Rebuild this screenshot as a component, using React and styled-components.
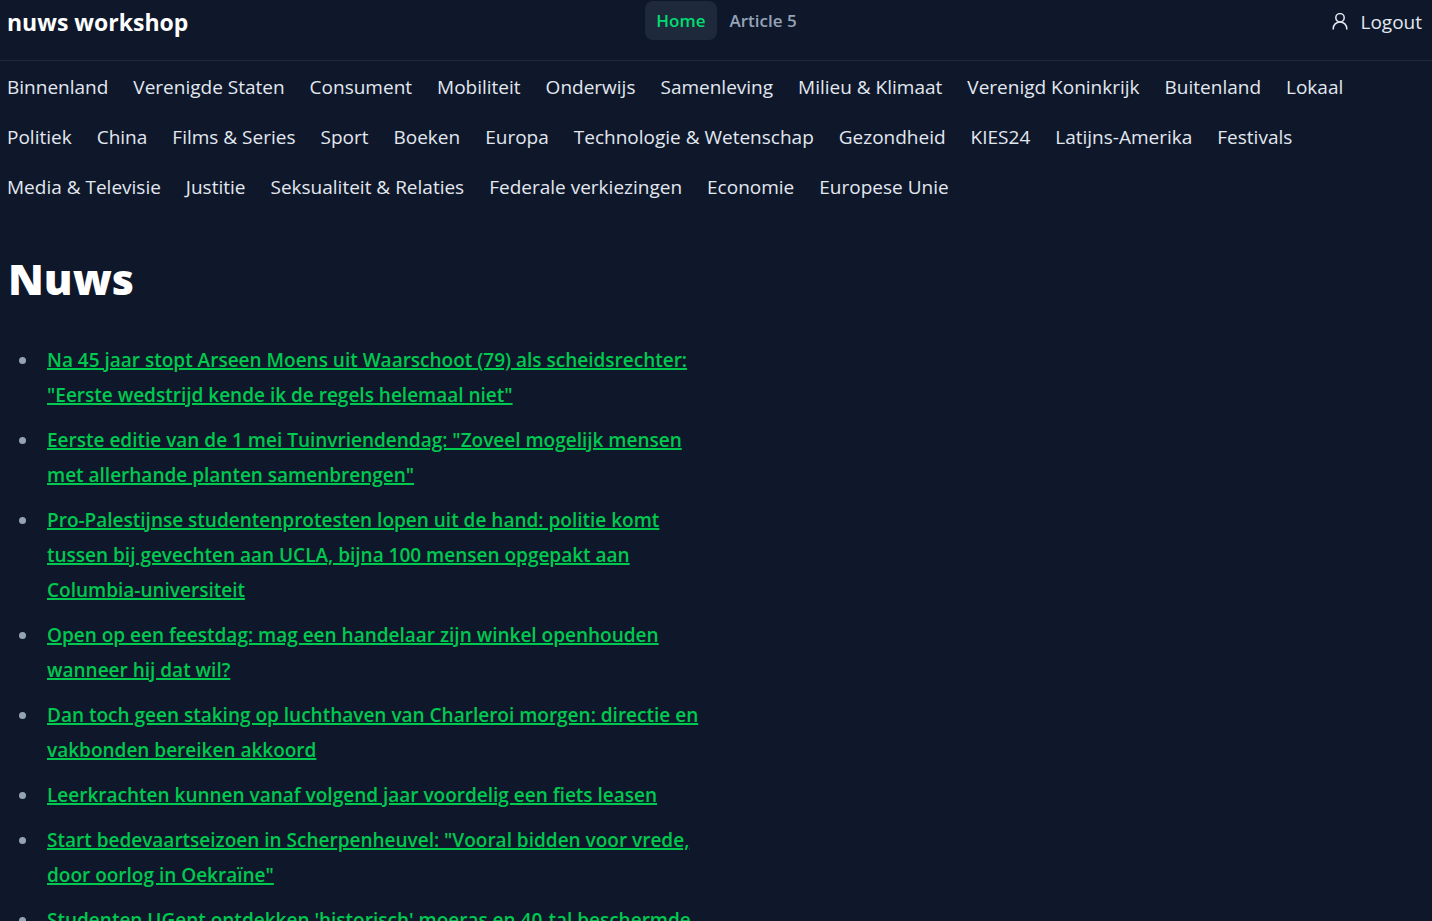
import React from "react";
import styled, { createGlobalStyle } from "styled-components";

const GlobalStyle = createGlobalStyle`
  *, *::before, *::after { box-sizing: border-box; }
  body {
    margin: 0;
    background: #0f172a;
    color: #e2e8f0;
    font-family: "Segoe UI", "Open Sans", "Noto Sans", sans-serif;
    font-size: 19px;
    line-height: 30px;
  }
`;

const Page = styled.div`
  height: 100vh;
  overflow: hidden;
`;

const Header = styled.header`
  display: grid;
  grid-template-columns: 1fr auto 1fr;
  align-items: start;
  height: 61px;
  padding: 0 10px 0 7px;
  border-bottom: 1px solid #1e293b;
`;

const Brand = styled.a`
  padding-top: 7px;
  color: #ffffff;
  font-size: 23px;
  font-weight: 700;
  text-decoration: none;
`;

const Tabs = styled.nav`
  display: flex;
  gap: 2px;
  padding: 1px 0 0 24px;
`;

const Tab = styled.a`
  padding: 5px 11px 4px;
  border-radius: 8px;
  background: ${(p) => (p.$active ? "#1e293b" : "transparent")};
  color: ${(p) => (p.$active ? "#00dc72" : "#94a3b8")};
  font-size: 17px;
  font-weight: 600;
  text-decoration: none;
`;

const LogoutButton = styled.button`
  display: flex;
  justify-self: end;
  align-items: center;
  gap: 12px;
  margin-top: 7px;
  padding: 0;
  border: 0;
  background: none;
  color: #e2e8f0;
  font: inherit;
`;

const Categories = styled.nav`
  display: flex;
  flex-wrap: wrap;
  padding: 1px 0 10px 7px;
`;

const Category = styled.a`
  padding: 10px 25px 10px 0;
  color: #e2e8f0;
  text-decoration: none;
`;

const Article = styled.main`
  max-width: 704px;
  padding-left: 8px;
`;

const Title = styled.h1`
  margin: 32px 0 39px;
  color: #ffffff;
  font-size: 43px;
  font-weight: 800;
  line-height: 50px;
`;

const List = styled.ul`
  margin: 0;
  padding-left: 31px;
`;

const Item = styled.li`
  margin-bottom: 10px;
  padding-left: 8px;
  line-height: 35px;

  &::marker { color: #94a3b8; }
`;

const Headline = styled.a`
  color: #00c950;
  font-weight: 600;
  text-decoration: underline;
  text-decoration-thickness: 2px;
`;

const categories = [
  "Binnenland", "Verenigde Staten", "Consument", "Mobiliteit", "Onderwijs",
  "Samenleving", "Milieu & Klimaat", "Verenigd Koninkrijk", "Buitenland", "Lokaal",
  "Politiek", "China", "Films & Series", "Sport", "Boeken", "Europa",
  "Technologie & Wetenschap", "Gezondheid", "KIES24", "Latijns-Amerika", "Festivals",
  "Media & Televisie", "Justitie", "Seksualiteit & Relaties",
  "Federale verkiezingen", "Economie", "Europese Unie",
];

const headlines = [
  "Na 45 jaar stopt Arseen Moens uit Waarschoot (79) als scheidsrechter: \"Eerste wedstrijd kende ik de regels helemaal niet\"",
  "Eerste editie van de 1 mei Tuinvriendendag: \"Zoveel mogelijk mensen met allerhande planten samenbrengen\"",
  "Pro-Palestijnse studentenprotesten lopen uit de hand: politie komt tussen bij gevechten aan UCLA, bijna 100 mensen opgepakt aan Columbia-universiteit",
  "Open op een feestdag: mag een handelaar zijn winkel openhouden wanneer hij dat wil?",
  "Dan toch geen staking op luchthaven van Charleroi morgen: directie en vakbonden bereiken akkoord",
  "Leerkrachten kunnen vanaf volgend jaar voordelig een fiets leasen",
  "Start bedevaartseizoen in Scherpenheuvel: \"Vooral bidden voor vrede, door oorlog in Oekraïne\"",
  "Studenten UGent ontdekken 'historisch' moeras en 40-tal beschermde",
];

function UserIcon() {
  return (
    <svg width="16" height="18" viewBox="0 0 16 18" fill="none" stroke="currentColor" strokeWidth="1.5" strokeLinecap="round" aria-hidden="true">
      <circle cx="8" cy="4.8" r="4.2" />
      <path d="M1.2 16v-.3a6.8 6.8 0 0 1 13.6 0v.3" />
    </svg>
  );
}

export default function App() {
  return (
    <Page>
      <GlobalStyle />
      <Header>
        <Brand href="#">nuws workshop</Brand>
        <Tabs>
          <Tab href="#" $active>Home</Tab>
          <Tab href="#article-5">Article 5</Tab>
        </Tabs>
        <LogoutButton type="button">
          <UserIcon />
          Logout
        </LogoutButton>
      </Header>
      <Categories>
        {categories.map((name) => (
          <Category key={name} href="#">{name}</Category>
        ))}
      </Categories>
      <Article>
        <Title>Nuws</Title>
        <List>
          {headlines.map((text) => (
            <Item key={text}>
              <Headline href="#">{text}</Headline>
            </Item>
          ))}
        </List>
      </Article>
    </Page>
  );
}
